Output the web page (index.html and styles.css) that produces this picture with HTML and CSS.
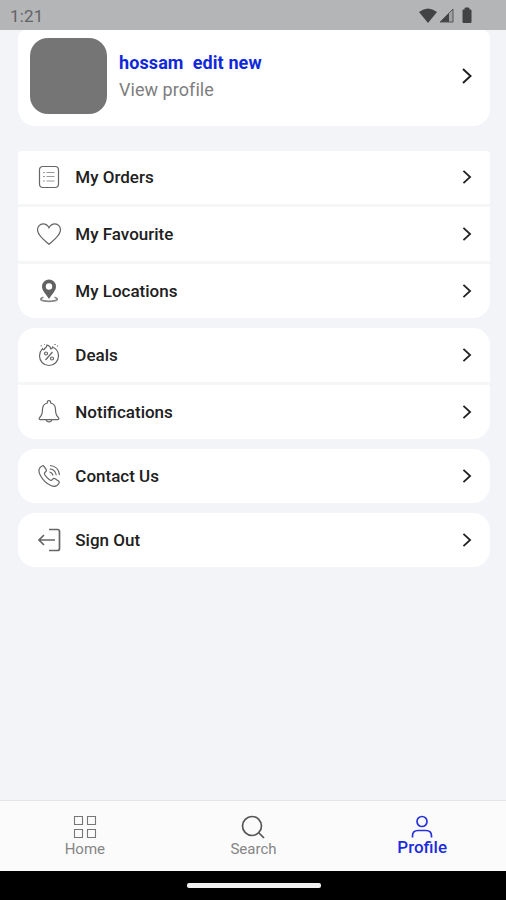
FILE: index.html
```html
<!DOCTYPE html>
<html lang="en">
<head>
<meta charset="utf-8">
<title>Profile</title>
<link rel="stylesheet" href="styles.css">
</head>
<body>
<svg width="0" height="0" class="defs"><symbol id="chevron" viewBox="0 0 12 18"><path d="M2 2l7.5 7L2 16" fill="none" stroke="#222" stroke-width="2"/></symbol></svg>
<header class="status">
  <span class="time">1:21</span>
  <svg class="status-icons" width="56" height="18" viewBox="0 0 56 18"><path d="M0 5Q9-2 18 5L9 16z" fill="#424344"/><path d="M34 2v13H21z" fill="#a0a1a2"/><path d="M30 6v9h-9z" fill="#424344"/><path d="M34 2v13H21z" fill="none" stroke="#555" stroke-width="1"/><path d="M44 3h2V1h4v2h2v12.500h-8z" fill="#424344" stroke="#424344" stroke-linejoin="round"/></svg>
</header>
<main class="content">
  <section class="profile-card">
    <div class="avatar"></div>
    <div class="who"><span class="name">hossam&nbsp; edit new</span><span class="view">View profile</span></div>
    <svg class="chevron big"><use href="#chevron"/></svg>
  </section>
  <section class="group first">
    <div class="row"><svg class="icon" viewBox="0 0 24 24"><rect x="2.500" y="1.500" width="19" height="21" rx="3.500"/><path d="M9.500 7.500h8M9.500 11.500h8M9.500 16h8M6 7.500h2M6 11.500h2M6 16h2" stroke="#999"/></svg><span class="label">My Orders</span><svg class="chevron"><use href="#chevron"/></svg></div>
    <div class="row"><svg class="icon" viewBox="0 0 24 24"><path d="M12 22.300C7 18 .5 13.500.5 8 .5 4.500 3 1.800 6 1.800c2.700 0 4.800 1.400 6 4 1.200-2.600 3.300-4 6-4 3 0 5.500 2.700 5.500 6.200C23.500 13.500 17 18 12 22.300z"/></svg><span class="label">My Favourite</span><svg class="chevron"><use href="#chevron"/></svg></div>
    <div class="row"><svg class="icon" viewBox="0 0 24 24"><path class="solid" fill-rule="evenodd" d="M12 .5a7 7 0 0 0-7 7C5 12 9 15 12 20c3-5 7-8 7-12.500A7 7 0 0 0 12 .5zM12 4.300a3.200 3.200 0 1 1 0 6.400a3.200 3.200 0 1 1 0-6.400z"/><path d="M6.500 18.300c-5 1.700-3 4 5.500 4s10.500-2.300 5.500-4" stroke="#888" stroke-width="1.700"/></svg><span class="label">My Locations</span><svg class="chevron"><use href="#chevron"/></svg></div>
  </section>
  <section class="group">
    <div class="row"><svg class="icon" viewBox="0 0 24 24"><path d="M8 5c1 0 1.500-1 2-3 2.500.5 3.500 2 4 4 1-.2 1.500-.9 1.600-2C19 5.500 21.500 9 21.500 13a9.500 9.500 0 0 1-19 0c0-3 1.300-5.500 3-7.300.4 1.500 2 1.300 2.500-.7zM15.500 9l-7 8"/><circle cx="9" cy="10.500" r="1.500"/><circle cx="15" cy="15.500" r="1.500"/><path d="M4 2l.5 1.500M17 1.500h2M20 3.500l1-1M7 1.500h1" stroke="#999"/></svg><span class="label">Deals</span><svg class="chevron"><use href="#chevron"/></svg></div>
    <div class="row"><svg class="icon" viewBox="0 0 24 24"><path d="M10.300 3V2.200c0-2 3.400-2 3.400 0V3c3.300.8 4.800 3.200 4.800 6.500 0 4.500 1 6.500 3 8.200.8 1 .2 2-.8 2H3.300c-1 0-1.600-1-.8-2 2-1.700 3-3.700 3-8.200C5.500 6.200 7 3.800 10.300 3zM9.300 20c.3 2.500 5.100 2.500 5.400 0"/></svg><span class="label">Notifications</span><svg class="chevron"><use href="#chevron"/></svg></div>
  </section>
  <section class="group">
    <div class="row"><svg class="icon" viewBox="0 0 24 24"><path d="M5.500 1.800c-4 2-4.500 5-2.200 9.500 2.500 4.800 6 8.300 10.500 10.200 4 1.700 6.500.7 8.200-2.300.5-1 .2-1.700-.6-2.300l-3.300-2.200c-1-.6-1.800-.4-2.400.5-1 1.400-1.700 1.600-3.200.5-2-1.400-3.500-3-4.700-5-.8-1.500-.5-2 .8-3 .9-.6 1-1.300.5-2.300L7 2.400c-.4-.8-.9-1-1.500-.6zM13 1.500c5.500.5 9 4 9.500 9.500M12.800 4.800c4 .5 6 2.500 6.500 6.500M12.500 8c2 .3 3 1.300 3.500 3.500"/></svg><span class="label">Contact Us</span><svg class="chevron"><use href="#chevron"/></svg></div>
  </section>
  <section class="group last">
    <div class="row"><svg class="icon" viewBox="0 0 24 24"><path d="M12 1.500h8.500q2 0 2 2v17q0 2-2 2H12M18 12H2.500M7 7l-5 5 5 5" stroke-width="1.700"/></svg><span class="label">Sign Out</span><svg class="chevron"><use href="#chevron"/></svg></div>
  </section>
</main>
<nav class="tabs">
  <div class="tab"><svg class="tab-icon" viewBox="0 0 24 24"><path d="M1.500 1.500h8v8h-8zM14.500 1.500h8v8h-8zM1.500 14.500h8v8h-8zM14.500 14.500h8v8h-8z" stroke-width="1.100" stroke="#777"/></svg><span>Home</span></div>
  <div class="tab"><svg class="tab-icon" viewBox="0 0 24 24"><circle cx="11" cy="11" r="9.500"/><path d="M18 18l5 5"/></svg><span>Search</span></div>
  <div class="tab active"><svg class="tab-icon" viewBox="0 0 24 24"><circle cx="12" cy="6.500" r="5"/><path d="M2.500 22.500V21q0-5.500 5.500-5.500h8q5.500 0 5.500 5.500v1.500"/></svg><span>Profile</span></div>
</nav>
<footer class="system"><div class="handle"></div></footer>
</body>
</html>
```
FILE: styles.css
```css
* { box-sizing: border-box; }
body {
  margin: 0;
  height: 900px;
  display: flex;
  flex-direction: column;
  overflow: hidden;
  background: #f2f4f8;
  font-family: Roboto, sans-serif;
}
.defs { position: absolute; }
.status {
  height: 30px;
  flex: none;
  background: #b4b5b7;
  display: flex;
  align-items: center;
  justify-content: space-between;
  padding: 1px 31px 0 10px;
}
.time { font-size: 17px; color: #626365; letter-spacing: .2px; }
.content { flex: 1; padding: 0 16.500px 0 17.500px; }
.profile-card {
  height: 95.500px;
  background: #fff;
  border-radius: 8px 8px 17px 17px;
  display: flex;
  align-items: center;
  padding: 0 17px 4px 12px;
}
.avatar { width: 77px; height: 76px; border-radius: 18px; background: #757575; }
.who { flex: 1; margin: 2px 0 0 12.500px; display: flex; flex-direction: column; gap: 5px; }
.name { font-size: 18px; line-height: 22px; font-weight: 700; color: #1028dc; letter-spacing: .1px; }
.view { font-size: 18px; line-height: 22px; color: #7e7e7e; letter-spacing: .05px; }
.chevron { width: 12px; height: 16px; flex: none; }
.chevron.big { height: 18px; }
.group {
  margin-top: 10.500px;
  border-radius: 17px;
  overflow: hidden;
  display: grid;
  gap: 3px;
  background: #f5f6f8;
}
.group.first { margin-top: 25px; border-radius: 4px 4px 17px 17px; }
.group.last { margin-top: 10px; }
.row {
  height: 53.800px;
  background: #fff;
  display: flex;
  align-items: center;
  padding: 0 17px 0 19.500px;
}
.icon { width: 24px; height: 24px; fill: none; stroke: #666; stroke-width: 1.200; }
.icon .solid { fill: #626262; stroke: none; }
.label { flex: 1; margin-left: 14.300px; font-size: 17px; font-weight: 500; color: #202020; }
.tabs {
  height: 71px;
  flex: none;
  background: #fbfbfb;
  border-top: 1px solid #e4e5e8;
  display: grid;
  grid-template-columns: repeat(3, 1fr);
}
.tab {
  display: flex;
  flex-direction: column;
  align-items: center;
  padding: 14px 0 0 1px;
  font-size: 15px;
  line-height: 18px;
  color: #858585;
}
.tab-icon { width: 24px; height: 24px; fill: none; stroke: #555; stroke-width: 1.700; margin-bottom: 1px; }
.active { color: #1b2bdd; font-size: 17px; font-weight: 500; }
.active .tab-icon { stroke: #2632dc; margin-bottom: -1px; }
.system { height: 29px; flex: none; background: #000; display: flex; justify-content: center; align-items: center; padding-left: 1px; }
.handle { width: 134px; height: 5px; border-radius: 2px; background: #f0f0f0; }
```
